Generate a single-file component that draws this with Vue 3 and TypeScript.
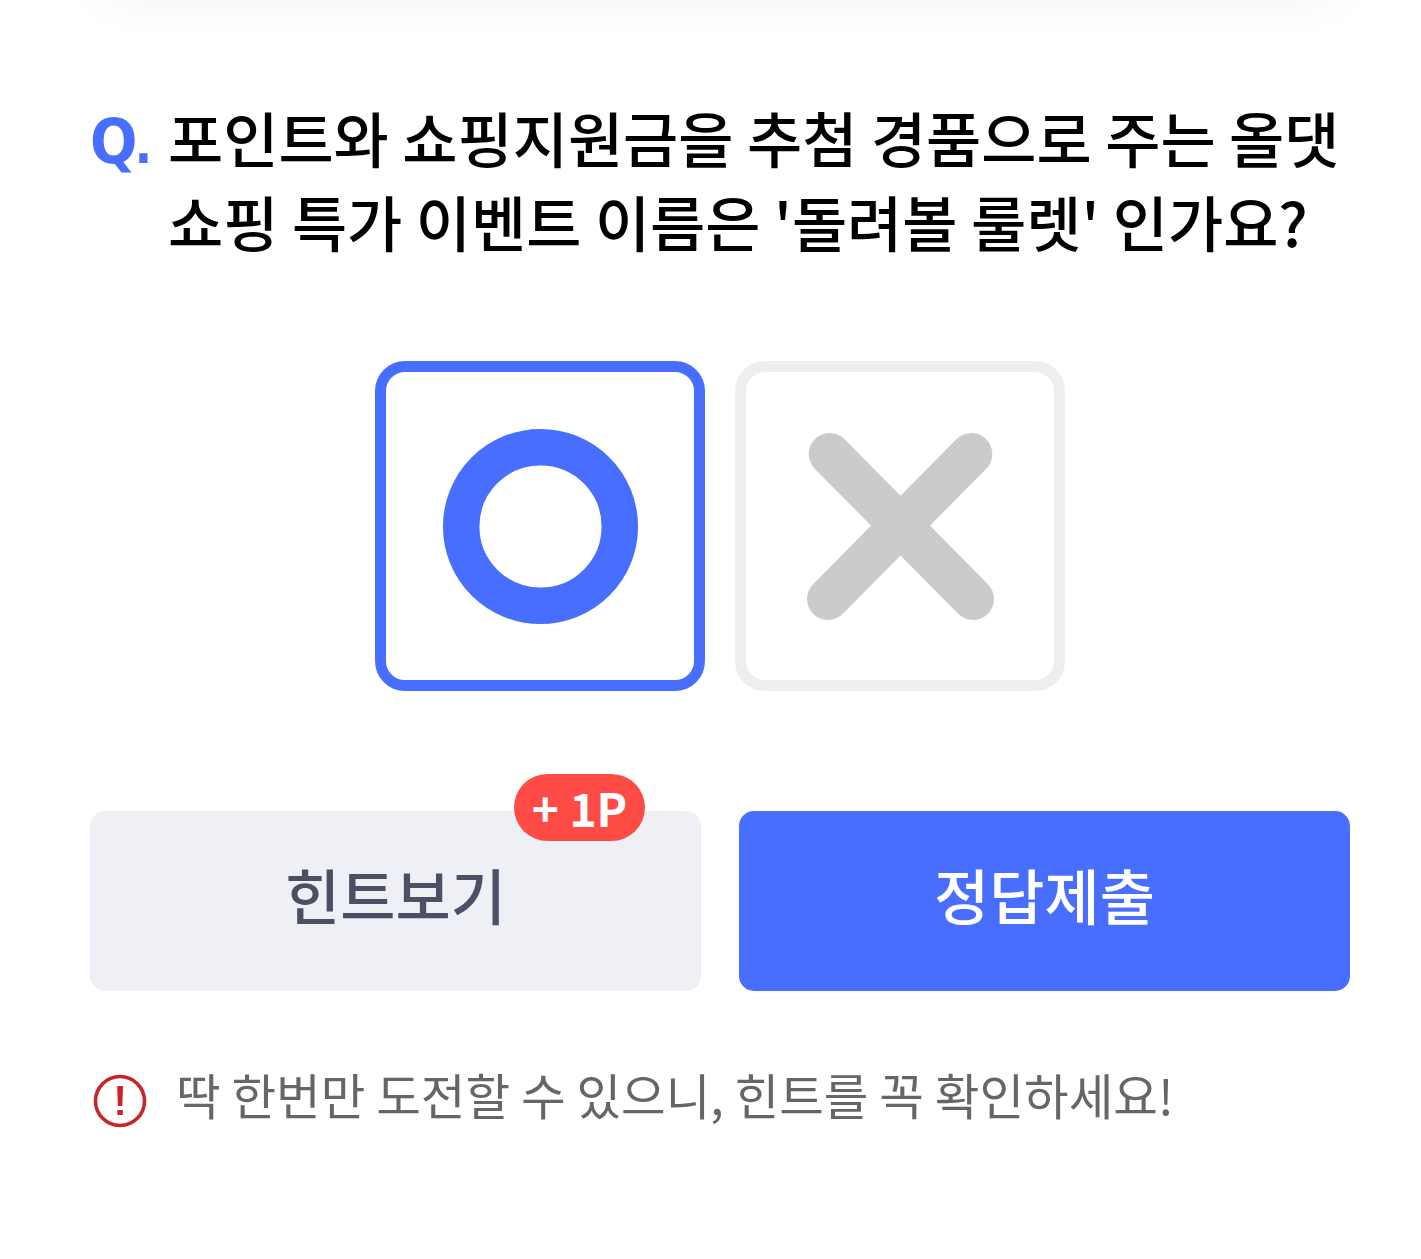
<script setup lang="ts">
import { ref } from 'vue'

const answer = ref<'O' | 'X'>('O')
const question = ["포인트와 쇼핑지원금을 추첨 경품으로 주는 올댓", "쇼핑 특가 이벤트 이름은 '돌려볼 룰렛' 인가요?"]
</script>

<template>
  <main class="quiz">
    <div class="upper-card"></div>
    <h1 class="question">
      <span class="q">Q<span class="dot">.</span></span>
      <span class="lines"><span v-for="line in question" :key="line">{{ line }}</span></span>
    </h1>
    <div class="choices">
      <button class="choice" :class="{ selected: answer === 'O' }" aria-label="O" @click="answer = 'O'">
        <svg width="308" height="308" viewBox="0 0 308 308"><circle cx="154.5" cy="154.5" r="79.3" fill="none" stroke="currentColor" stroke-width="36.5" /></svg>
      </button>
      <button class="choice" :class="{ selected: answer === 'X' }" aria-label="X" @click="answer = 'X'">
        <svg width="308" height="308" viewBox="0 0 308 308"><path d="M83.700 82L227 227M225.300 82L82 227" fill="none" stroke="currentColor" stroke-width="42" stroke-linecap="round" /></svg>
      </button>
    </div>
    <div class="actions">
      <button class="action hint"><span>힌트보기</span><span class="badge">+ 1P</span></button>
      <button class="action submit"><span>정답제출</span></button>
    </div>
    <p class="notice">
      <svg width="54" height="54" viewBox="0 0 54 54"><circle cx="27" cy="27" r="24.500" fill="none" stroke="#c92525" stroke-width="3.600" /><path d="M24.200 12h5.800l-.7 20h-4.400zM24.400 36h5.400v5h-5.400z" fill="#c92525" /></svg>
      <span>딱 한번만 도전할 수 있으니, 힌트를 꼭 확인하세요!</span>
    </p>
  </main>
</template>

<style>
body { background: #fff; }
</style>

<style scoped>
.quiz {
  box-sizing: border-box;
  width: 1421px;
  height: 1259px;
  overflow: hidden;
  background: #fff;
  font-family: "Noto Sans CJK KR", sans-serif;
}
.upper-card {
  width: 1260px;
  height: 200px;
  margin: -208px 0 0 90px;
  border-radius: 50px;
  box-shadow: 0 0 56px rgba(0, 0, 0, 0.07);
}
.question {
  display: flex;
  margin: 103px 0 0 90px;
  font-size: 60px;
  line-height: 84px;
  font-weight: 500;
  color: #000;
  white-space: nowrap;
}
.q { width: 78px; padding-top: 5px; box-sizing: border-box; font-family: "DejaVu Sans Condensed", "DejaVu Sans", sans-serif; font-size: 62px; font-stretch: condensed; font-weight: 700; letter-spacing: -3px; color: #486eff; }
.dot { font-size: 52px; }
.lines { display: flex; flex-direction: column; align-items: flex-start; }
.choices { display: flex; gap: 30px; margin: 98px 0 0 375px; }
.choice {
  box-sizing: border-box;
  width: 330px;
  height: 330px;
  padding: 0;
  border: 11px solid #eee;
  border-radius: 30px;
  background: #fff;
  color: #cbcbcb;
}
.choice.selected { border-color: #486eff; color: #486eff; }
.choice svg { display: block; }
.actions { display: flex; gap: 38px; margin: 120px 0 0 90px; }
.action {
  position: relative;
  width: 611px;
  height: 180px;
  padding: 0 0 15px;
  border: 0;
  border-radius: 15px;
  font: 500 60px/84px "Noto Sans CJK KR", sans-serif;
}
.hint { background: #eff0f6; color: #4b5064; }
.submit { background: #486eff; color: #fff; }
.badge {
  position: absolute;
  left: 424px;
  top: -37px;
  width: 131px;
  height: 67px;
  border-radius: 34px;
  background: #ff4b45;
  color: #fff;
  font: 700 46px/66px "Noto Sans CJK KR", sans-serif;
}
.notice { display: flex; align-items: center; gap: 29px; margin: 82px 0 0 93px; font-size: 48.5px; line-height: 70px; color: #666; white-space: nowrap; }
.notice span { margin: -14px 0 0; }
</style>
